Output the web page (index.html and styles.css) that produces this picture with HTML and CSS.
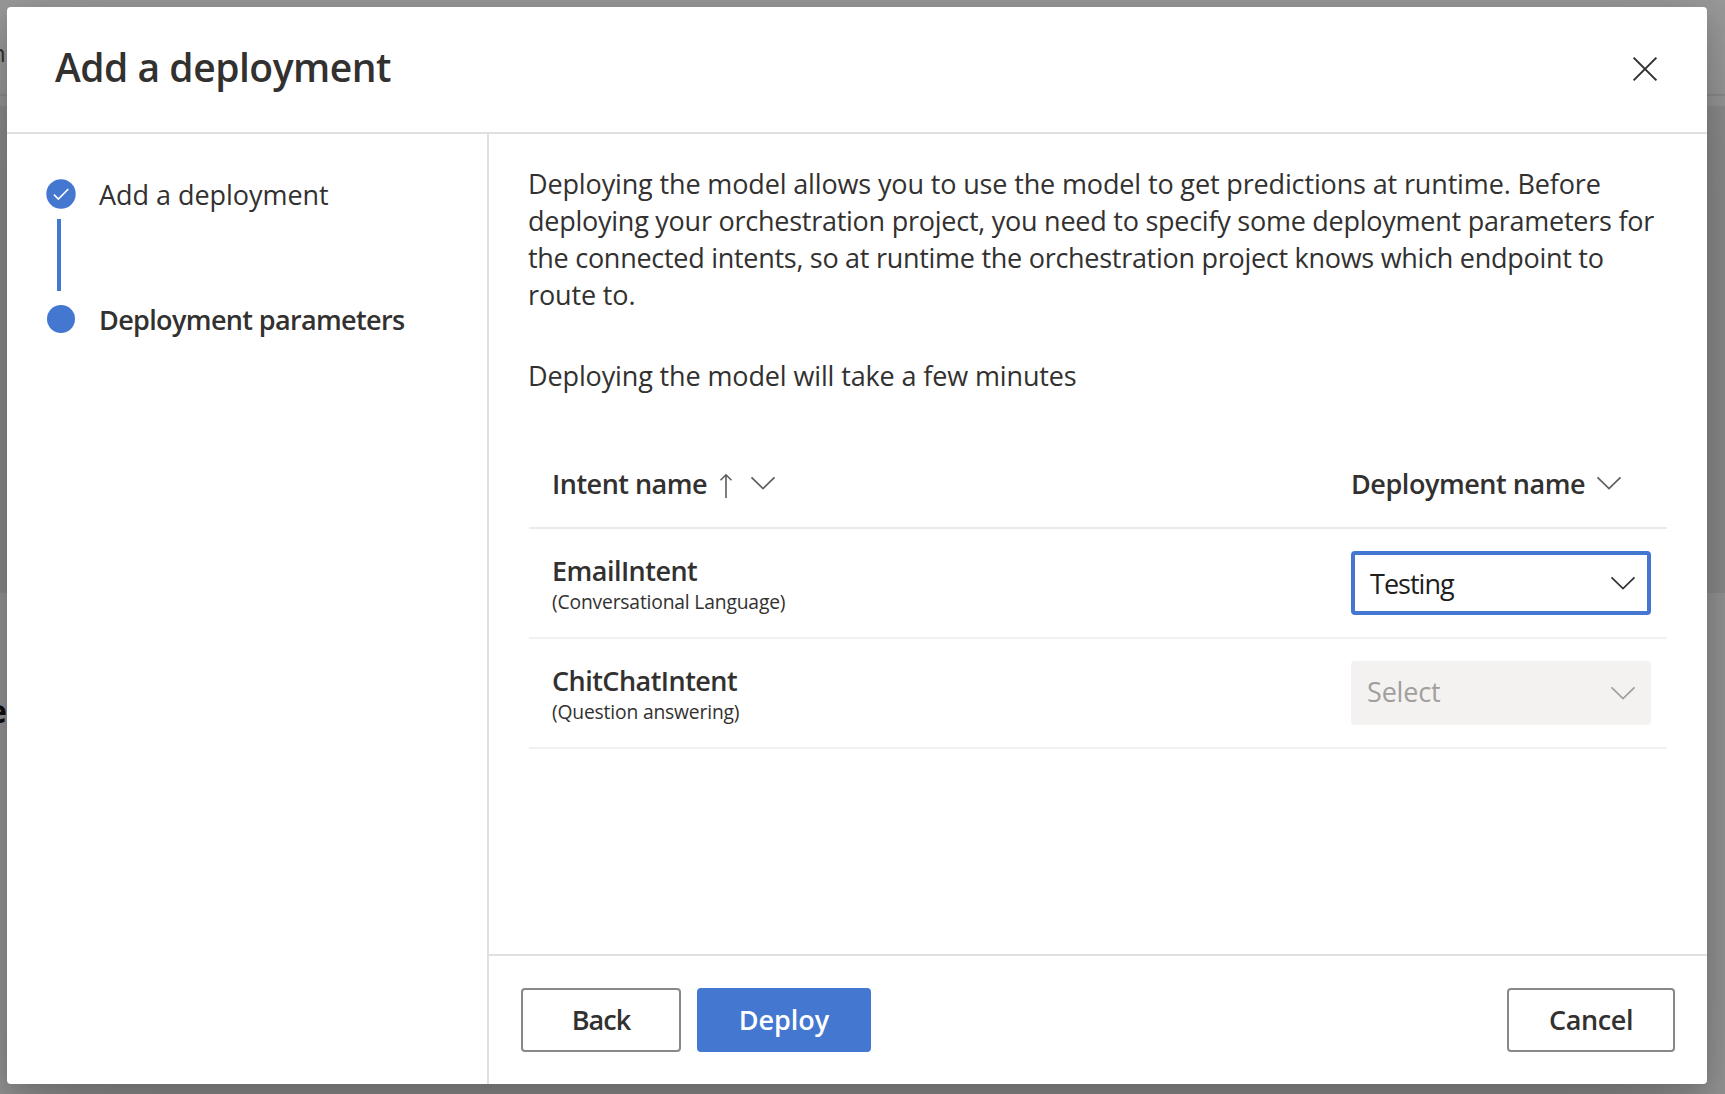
FILE: index.html
```html
<!DOCTYPE html>
<html lang="en">
<head>
<meta charset="utf-8">
<title>Add a deployment</title>
<link rel="stylesheet" href="styles.css">
</head>
<body>
<div class="backdrop" aria-hidden="true">
  <div class="bar"><span class="bar-text">n</span></div>
  <div class="strip"></div>
  <div class="panel"></div>
  <div class="lower"><span class="lower-text">e</span></div>
</div>
<div class="dialog" role="dialog">
  <header class="header">
    <h1 class="title">Add a deployment</h1>
    <svg class="close" width="26" height="26" viewBox="0 0 26 26"><path d="M1.6 1.6 24.4 24.4M24.4 1.6 1.6 24.4"/></svg>
  </header>
  <div class="body">
    <nav class="steps">
      <div class="step">
        <svg width="30" height="30" viewBox="0 0 30 30"><circle cx="15" cy="15" r="14.7" fill="#4377d0"/><path d="M7.9 15.6 12.4 20 22.3 10" fill="none" stroke="#fff" stroke-width="1.6"/></svg>
        <span class="s-add">Add a deployment</span>
      </div>
      <div class="connector"></div>
      <div class="step current">
        <svg width="30" height="30" viewBox="0 0 30 30"><circle cx="15" cy="15" r="14" fill="#4377d0"/></svg>
        <span class="s-params">Deployment parameters</span>
      </div>
    </nav>
    <main class="main">
      <section class="content">
        <p class="text"><span class="l1">Deploying the model allows you to use the model to get predictions at runtime. Before</span><br><span class="l2">deploying your orchestration project, you need to specify some deployment parameters for</span><br><span class="l3">the connected intents, so at runtime the orchestration project knows which endpoint to</span><br><span class="l1">route to.</span></p>
        <p class="text note">Deploying the model will take a few minutes</p>
        <div class="table">
          <div class="row head">
            <div class="cell">
              <span class="h-intent">Intent name</span>
              <svg class="arrow" width="14" height="26" viewBox="0 0 14 26"><path d="M7 25V2M1.5 7.3 7 1.8 12.5 7.3"/></svg>
              <svg class="chev" width="26" height="14" viewBox="0 0 26 14"><path d="M1.5 1.4 13 12.6 24.5 1.4"/></svg>
            </div>
            <div class="cell right">
              <span class="h-deploy">Deployment name</span>
              <svg class="chev near" width="26" height="14" viewBox="0 0 26 14"><path d="M1.5 1.4 13 12.6 24.5 1.4"/></svg>
            </div>
          </div>
          <div class="row">
            <div class="intent">
              <div class="name">EmailIntent</div>
              <div class="kind">(Conversational Language)</div>
            </div>
            <div class="select focused"><span class="v-testing">Testing</span><svg class="chev" width="26" height="14" viewBox="0 0 26 14"><path d="M1.5 1.4 13 12.6 24.5 1.4"/></svg></div>
          </div>
          <div class="row">
            <div class="intent">
              <div class="name">ChitChatIntent</div>
              <div class="kind">(Question answering)</div>
            </div>
            <div class="select disabled"><span class="v-select">Select</span><svg class="chev" width="26" height="14" viewBox="0 0 26 14"><path d="M1.5 1.4 13 12.6 24.5 1.4"/></svg></div>
          </div>
        </div>
      </section>
      <footer class="footer">
        <button class="btn back">Back</button>
        <button class="btn primary">Deploy</button>
        <button class="btn cancel">Cancel</button>
      </footer>
    </main>
  </div>
</div>
</body>
</html>
```
FILE: styles.css
```css
* { box-sizing: border-box; }
body {
  margin: 0;
  width: 1725px;
  height: 1094px;
  padding: 7px 18px 10px 7px;
  overflow: hidden;
  font-family: "Open Sans", "Noto Sans", sans-serif;
  font-size: 27px;
  line-height: 37px;
  color: #323130;
}
h1, p { margin: 0; }
svg { flex: none; display: block; }

/* dimmed page behind the dialog */
.backdrop {
  position: absolute;
  inset: 0;
  z-index: -1;
  display: flex;
  flex-direction: column;
  overflow: hidden;
  background: #999;
}
.bar { height: 96px; border-bottom: 2px solid #8d8d8d; }
.bar-text { display: block; margin: 34px 0 0 -9px; font-size: 24px; line-height: 38px; }
.strip { height: 10px; }
.panel { height: 487px; background: #8f8f8f; }
.lower { flex: 1; }
.lower-text { display: block; margin: 98px 0 0 -12px; font-size: 32px; line-height: 40px; font-weight: 700; color: #111; }

.dialog {
  width: 1700px;
  height: 1077px;
  display: flex;
  flex-direction: column;
  background: #fff;
  border-radius: 4px;
  box-shadow: 0 51px 115px rgba(0, 0, 0, .22), 0 10px 29px rgba(0, 0, 0, .18);
}
.header {
  height: 127px;
  flex: none;
  display: flex;
  justify-content: space-between;
  align-items: flex-start;
  padding: 40px 49px 0 48px;
  border-bottom: 2px solid #e1dfdd;
  border-color: #e0e0e0;
}
.title { font-size: 39px; line-height: 40px; font-weight: 600; letter-spacing: -.48px; }
.close { margin-top: 9px; }
.close path { stroke: #323130; stroke-width: 2; }
.body { flex: 1; display: flex; min-height: 0; }

.steps { width: 482px; flex: none; padding: 45px 0 0 39px; border-right: 2px solid #e0e0e0; }
.step { height: 30px; display: flex; align-items: center; gap: 23px; white-space: nowrap; }
.step.current { font-weight: 600; }
.connector { width: 4px; height: 72px; margin: 10px 0 13px 11px; background: #4377d0; }
.s-add { letter-spacing: -.04px; }
.s-params { letter-spacing: -.64px; }

.main { flex: 1; display: flex; flex-direction: column; }
.content { flex: 1; padding: 31px 40px 0; }
.text { white-space: nowrap; margin-left: -1px; }
.l1 { letter-spacing: -.14px; }
.l2 { letter-spacing: -.25px; }
.l3 { letter-spacing: -.28px; }
.note { margin-top: 44px; letter-spacing: -.13px; }

.table { margin-top: 45px; }
.row {
  height: 110px;
  display: flex;
  justify-content: space-between;
  align-items: flex-start;
  padding: 22px 16px 0 23px;
  border-bottom: 2px solid #f1f1f1;
}
.row.head { height: 90px; padding-top: 26px; border-color: #eaeaea; font-weight: 600; }
.cell { display: flex; align-items: flex-start; }
.cell.right { width: 300px; }
.h-intent { letter-spacing: -.5px; }
.h-deploy { letter-spacing: -.45px; }
.chev { fill: none; stroke: #605e5c; stroke-width: 1.7; margin: 11px 0 0 17px; }
.chev.near { margin-left: 11px; }
.arrow { fill: none; stroke: #605e5c; stroke-width: 1.6; margin: 8px 0 0 12px; }
.intent { padding-top: 1px; }
.name { font-weight: 600; letter-spacing: -.53px; }
.kind { font-size: 19.3px; line-height: 26px; letter-spacing: -.18px; }
.select {
  width: 300px;
  height: 64px;
  display: flex;
  justify-content: space-between;
  align-items: flex-start;
  border-radius: 4px;
}
.focused { border: 4px solid #4377d0; padding: 10px 11px 0 15px; color: #201f1e; }
.focused .chev { stroke: #323130; }
.disabled { background: #f3f2f1; padding: 12px 15px 0 16px; color: #a19f9d; }
.disabled .chev { stroke: #a19f9d; margin-top: 13px; }
.v-testing { letter-spacing: -.98px; }
.v-select { letter-spacing: -.18px; }

.footer {
  height: 130px;
  flex: none;
  display: flex;
  gap: 16px;
  padding: 32px 32px 0;
  border-top: 2px solid #e0e0e0;
}
.btn {
  height: 64px;
  padding: 0 0 1px;
  border: 2px solid #8a8886;
  border-radius: 4px;
  background: #fff;
  color: #323130;
  font: 600 27px/37px "Open Sans", "Noto Sans", sans-serif;
}
.back { width: 160px; letter-spacing: -.96px; }
.primary { width: 174px; background: #4377d0; border-color: #4377d0; color: #fff; }
.cancel { width: 168px; margin-left: auto; letter-spacing: -.38px; }
```
